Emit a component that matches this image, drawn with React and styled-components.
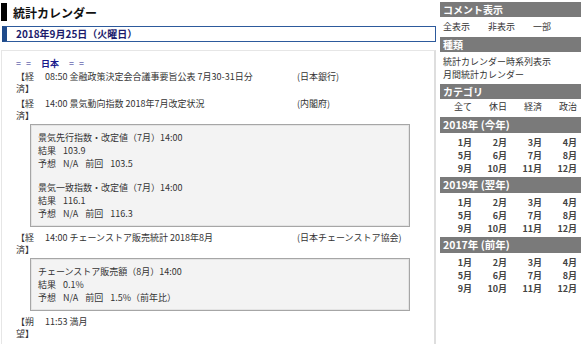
import React from "react";
import styled, { createGlobalStyle } from "styled-components";

const GlobalStyle = createGlobalStyle`
  body {
    margin: 0;
    background: #fff;
    font-family: "Noto Sans CJK JP", "Noto Sans", sans-serif;
    color: #333;
  }
`;

const entries = [
  {
    cat: "【経済】",
    time: "08:50",
    title: "金融政策決定会合議事要旨公表 7月30-31日分",
    src: "(日本銀行)",
  },
  {
    cat: "【経済】",
    time: "14:00",
    title: "景気動向指数 2018年7月改定状況",
    src: "(内閣府)",
    details: [
      { name: "景気先行指数・改定値（7月）14:00", result: "103.9", forecast: "N/A", prev: "103.5" },
      { name: "景気一致指数・改定値（7月）14:00", result: "116.1", forecast: "N/A", prev: "116.3" },
    ],
  },
  {
    cat: "【経済】",
    time: "14:00",
    title: "チェーンストア販売統計 2018年8月",
    src: "(日本チェーンストア協会)",
    details: [
      { name: "チェーンストア販売額（8月）14:00", result: "0.1%", forecast: "N/A", prev: "1.5%（前年比）" },
    ],
  },
  {
    cat: "【朔望】",
    time: "11:53",
    title: "満月",
    src: "",
  },
];

const years = ["2018年 (今年)", "2019年 (翌年)", "2017年 (前年)"];
const months = ["1月", "2月", "3月", "4月", "5月", "6月", "7月", "8月", "9月", "10月", "11月", "12月"];

function App() {
  return (
    <>
      <GlobalStyle />
      <Page>
        <Main>
          <Title>
            <TitleBar />
            <TitleText>統計カレンダー</TitleText>
          </Title>
          <DateBar>2018年9月25日（火曜日）</DateBar>
          <Panel>
            <Country>
              <Eq>= =</Eq>
              <CountryName>日本</CountryName>
              <Eq>= =</Eq>
            </Country>
            {entries.map((e, i) => (
              <React.Fragment key={i}>
                <Entry>
                  <Cat>{e.cat}</Cat>
                  <div>
                    {e.time} {e.title}
                  </div>
                  <Source>{e.src}</Source>
                </Entry>
                {e.details && (
                  <DetailBox>
                    {e.details.map((d, j) => (
                      <Detail key={j}>
                        <div>{d.name}</div>
                        <div>
                          <Label>結果</Label>
                          {d.result}
                        </div>
                        <div>
                          <Label>予想</Label>
                          <Label>{d.forecast}</Label>
                          <Label>前回</Label>
                          {d.prev}
                        </div>
                      </Detail>
                    ))}
                  </DetailBox>
                )}
              </React.Fragment>
            ))}
          </Panel>
        </Main>

        <Side>
          <SideHeader>コメント表示</SideHeader>
          <CommentRow>
            <span>全表示</span>
            <span>非表示</span>
            <span>一部</span>
          </CommentRow>
          <SideHeader $gap={4}>種類</SideHeader>
          <TypeList>
            <div>統計カレンダー時系列表示</div>
            <div>月間統計カレンダー</div>
          </TypeList>
          <SideHeader $gap={3}>カテゴリ</SideHeader>
          <CatGrid>
            <Cell>全て</Cell>
            <Cell>休日</Cell>
            <Cell>経済</Cell>
            <Cell>政治</Cell>
          </CatGrid>
          {years.map((y, i) => (
            <React.Fragment key={y}>
              <YearHeader $gap={i === 0 ? 4 : 2}>{y}</YearHeader>
              <MonthGrid>
                {months.map((m) => (
                  <Cell key={m} $bold>
                    {m}
                  </Cell>
                ))}
              </MonthGrid>
            </React.Fragment>
          ))}
        </Side>
      </Page>
    </>
  );
}

const Page = styled.div`
  display: grid;
  grid-template-columns: 437px 141px;
  column-gap: 3px;
  width: 584px;
  height: 344px;
  overflow: hidden;
`;

const Main = styled.div`
  display: flex;
  flex-direction: column;
`;

const Title = styled.div`
  display: flex;
  align-items: center;
  height: 18px;
  margin: 3px 0 0 1px;
`;

const TitleBar = styled.div`
  width: 6px;
  height: 18px;
  background: #000;
`;

const TitleText = styled.h1`
  margin: 0 0 0 6px;
  font-size: 12px;
  font-weight: bold;
  color: #111;
`;

const DateBar = styled.div`
  box-sizing: border-box;
  margin: 5px 0 0 2px;
  width: 434px;
  height: 16px;
  border: 1px solid #2d5a9c;
  border-left: 5px solid #1f4a8a;
  padding-left: 9px;
  font-size: 10px;
  line-height: 14px;
  font-weight: bold;
  color: #1b1b6c;
`;

const Panel = styled.div`
  box-sizing: border-box;
  margin: 8px 0 0 1px;
  width: 435px;
  flex: 1;
  border: 1px solid #e6e6e6;
  border-right: 2px solid #dedede;
  border-bottom: none;
  padding: 7px 0 0 14px;
  font-size: 9px;
`;

const Country = styled.div`
  display: flex;
  line-height: 11px;
  color: #1a1a8c;
  font-weight: bold;
`;

const Eq = styled.span`
  word-spacing: 3px;
  font-weight: normal;
`;

const CountryName = styled.span`
  margin: 0 10px;
`;

const Entry = styled.div`
  display: grid;
  grid-template-columns: 24px 247px auto;
  column-gap: 5px;
  padding: 1.5px 0;
  line-height: 12px;
`;

const Cat = styled.div`
  word-break: break-all;
`;

const Source = styled.div`
  white-space: nowrap;
`;

const DetailBox = styled.div`
  box-sizing: border-box;
  width: 380px;
  margin: 1px 0 3px 14px;
  padding: 6px 7px;
  background: #f3f3f3;
  border: 1px solid #a6a6a6;
  box-shadow: inset 0 0 0 1px #e4e4e4;
  line-height: 13px;
`;

const Detail = styled.div`
  & + & {
    margin-top: 11px;
  }
`;

const Label = styled.span`
  margin-right: 7px;
`;

const Side = styled.div`
  padding-top: 2px;
  font-size: 9px;
  color: #333;
`;

const SideHeader = styled.div`
  margin-top: ${(p) => p.$gap || 0}px;
  height: 15px;
  line-height: 15px;
  padding-left: 3px;
  background: #7a7a7a;
  color: #fff;
  font-size: 10px;
  font-weight: bold;
`;

const YearHeader = styled(SideHeader)`
  height: 16px;
  line-height: 16px;
  font-size: 10.5px;
`;

const CommentRow = styled.div`
  display: flex;
  gap: 18px;
  padding: 3px 0 0 3px;
  line-height: 13px;
`;

const TypeList = styled.div`
  padding: 3px 0 0 3px;
  line-height: 13px;
`;

const CatGrid = styled.div`
  display: grid;
  grid-template-columns: repeat(4, 35px);
  padding-top: 1px;
  line-height: 13px;
`;

const MonthGrid = styled(CatGrid)`
  padding-top: 3px;
`;

const Cell = styled.div`
  text-align: right;
  padding-right: 3px;
  font-weight: ${(p) => (p.$bold ? "bold" : "normal")};
  color: ${(p) => (p.$bold ? "#444" : "#333")};
`;

export default App;
